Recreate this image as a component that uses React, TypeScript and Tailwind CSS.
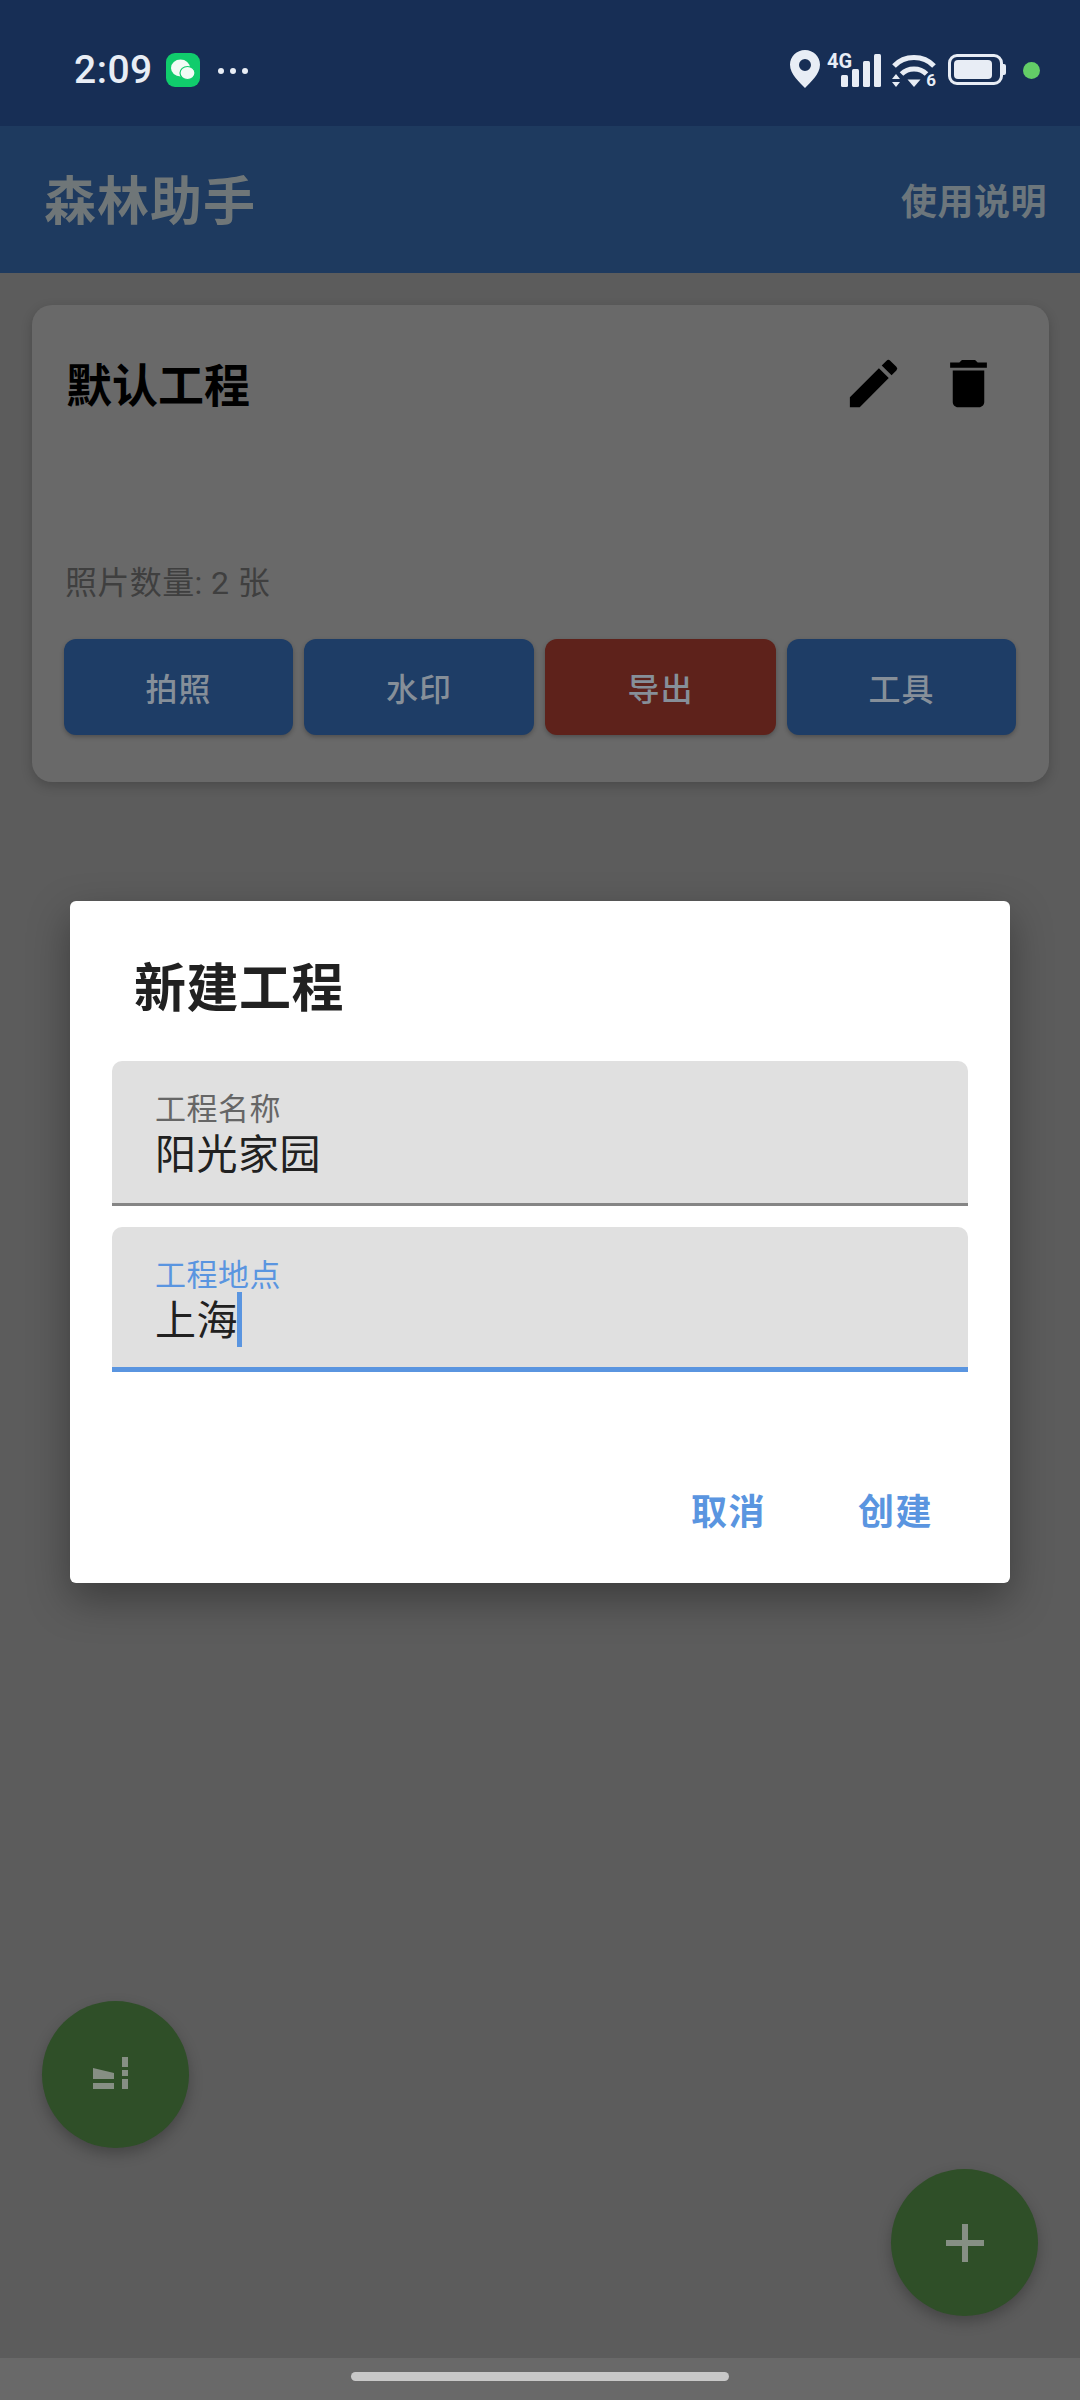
import { MdDelete, MdEdit } from 'react-icons/md';

const CJK = "font-['Roboto','Noto_Sans_CJK_SC',sans-serif]";

const actions = [
  { label: '拍照', color: 'bg-[#1e3d66]', width: 'w-[229px]' },
  { label: '水印', color: 'bg-[#1e3d66]', width: 'w-[230px]' },
  { label: '导出', color: 'bg-[#5e221b]', width: 'w-[231px]' },
  { label: '工具', color: 'bg-[#1e3d66]', width: 'w-[229px]' },
];

const StatusBar = () => (
  <div className="h-[126px] shrink-0 bg-[#172e55] flex items-start pt-[50px] pl-[74px] pr-[40px] text-[#e8edf5]">
    <span className="text-[39px] leading-[40px] font-medium font-['Roboto',sans-serif] tracking-[0.5px]">2:09</span>
    {/* WeChat notification */}
    <div className="ml-[13px] mt-[3px] w-[34px] h-[34px] rounded-[9px] bg-[#10cc6c] flex items-center justify-center">
      <svg width="26" height="24" viewBox="0 0 26 24" fill="#f2fbf5">
        <ellipse cx="10.5" cy="10" rx="9.5" ry="8.5" />
        <ellipse cx="17.5" cy="15" rx="7.5" ry="6.5" stroke="#10cc6c" strokeWidth="1.2" />
      </svg>
    </div>
    <div className="ml-[18px] mt-[18px] flex gap-[6px]">
      <div className="w-[6px] h-[6px] rounded-full bg-[#e8edf5]" />
      <div className="w-[6px] h-[6px] rounded-full bg-[#e8edf5]" />
      <div className="w-[6px] h-[6px] rounded-full bg-[#e8edf5]" />
    </div>
    <div className="ml-auto flex items-start">
      {/* location */}
      <svg width="30" height="38" viewBox="0 0 30 38" fill="#e8edf5">
        <path fillRule="evenodd" d="M15 0C6.7 0 0 6.6 0 14.8 0 24 9.5 32.5 15 38c5.5-5.5 15-14 15-23.2C30 6.6 23.3 0 15 0zm0 9a6 6 0 1 1 0 12 6 6 0 0 1 0-12z" />
      </svg>
      {/* 4G + signal */}
      <div className="relative ml-[7px] w-[54px] h-[38px]">
        <span className="absolute left-0 top-[1px] text-[20px] leading-[20px] font-bold font-['Roboto',sans-serif]">4G</span>
        <svg className="absolute left-[14px] top-[4px]" width="41" height="33" viewBox="0 0 41 33" fill="#e8edf5">
          <rect x="0" y="21" width="7" height="12" rx="1.5" />
          <rect x="11" y="15" width="7" height="18" rx="1.5" />
          <rect x="22" y="7" width="7" height="26" rx="1.5" />
          <rect x="33" y="0" width="7" height="33" rx="1.5" />
        </svg>
      </div>
      {/* wifi */}
      <div className="relative ml-[11px] w-[44px] h-[38px]">
        <svg className="absolute left-0 top-[5px]" width="44" height="33" viewBox="0 0 44 33" fill="none">
          <path d="M2 11C8 4.500 14 2.500 22 2.500S36 4.500 42 11" stroke="#e8edf5" strokeWidth="5" />
          <path d="M9.500 19C13 15.500 17 14 22 14s9 1.500 12.500 5" stroke="#e8edf5" strokeWidth="5" />
          <path d="M15.500 24.500h13L22 32z" fill="#e8edf5" />
          <path d="M0 24l4-5 4 5zM0 27h8l-4 5z" fill="#e8edf5" />
        </svg>
        <span className="absolute right-0 top-[22px] text-[17px] leading-[17px] font-bold font-['Roboto',sans-serif]">6</span>
      </div>
      {/* battery */}
      <div className="ml-[12px] mt-[4px] flex items-center">
        <div className="w-[55px] h-[31px] rounded-[9px] border-[3px] border-[#e8edf5] p-[3px]">
          <div className="w-[38px] h-full rounded-[4px] bg-[#e8edf5]" />
        </div>
        <div className="w-[3px] h-[11px] rounded-r-[2px] bg-[#e8edf5]" />
      </div>
      <div className="ml-[17px] mt-[12px] w-[17px] h-[17px] rounded-full bg-[#63cd67]" />
    </div>
  </div>
);

const Field = ({ label, value, focused }: { label: string; value: string; focused?: boolean }) => (
  <div
    className={`h-[145px] rounded-t-[10px] bg-[#e0e0e0] pl-[43px] pt-[33px] ${
      focused ? 'border-b-[5px] border-[#5a95e0]' : 'border-b-[3px] border-[#858585]'
    }`}
  >
    <div className={`text-[31px] leading-[32px] tracking-[0.5px] ${focused ? 'text-[#5a95e0]' : 'text-[#666666]'}`}>{label}</div>
    <div className="flex items-center mt-[4px] h-[50px] text-[41px] leading-[50px] tracking-[0.5px] text-[#212121]">
      {value}
      {focused && <div className="w-[5px] h-[55px] bg-[#5a95e0] -mt-[3px] -ml-[1px]" />}
    </div>
  </div>
);

export default function App() {
  return (
    <div className={`relative w-[1080px] h-[2400px] overflow-hidden flex flex-col bg-[#5c5c5c] ${CJK}`}>
      <StatusBar />

      {/* App bar */}
      <div className="h-[147px] shrink-0 bg-[#1e3a5f] flex items-center justify-between pl-[44px] pr-[33px]">
        <span className="pt-[7px] text-[52px] font-bold tracking-[1px] text-[#6f7678]">森林助手</span>
        <span className="pt-[6px] text-[36px] font-semibold tracking-[0.5px] text-[#6c767c]">使用说明</span>
      </div>

      {/* Project list */}
      <div className="flex-1 pt-[32px] pl-[32px]">
        <div className="w-[1017px] h-[477px] rounded-[20px] bg-[#696969] shadow-[0_4px_12px_rgba(0,0,0,0.2)] px-[32px] pt-[47px]">
          <div className="flex items-center justify-between h-[63px] pl-[2px] pr-[17px]">
            <span className="pt-[6px] text-[46px] font-bold text-black">默认工程</span>
            <div className="flex items-center gap-[32px] text-black">
              <MdEdit size={63} />
              <MdDelete size={63} />
            </div>
          </div>
          <div className="mt-[146px] pl-[1px] text-[32px] leading-[44px] tracking-[0.4px] text-[#3f3f3f]">照片数量: 2 张</div>
          <div className="mt-[34px] flex gap-[11px]">
            {actions.map((a) => (
              <div
                key={a.label}
                className={`${a.color} ${a.width} h-[96px] pt-[5px] rounded-[12px] shadow-[0_2px_4px_rgba(0,0,0,0.25)] flex items-center justify-center text-[32px] font-medium tracking-[1px] text-[#868f99]`}
              >
                {a.label}
              </div>
            ))}
          </div>
        </div>
      </div>

      {/* Gesture bar */}
      <div className="h-[42px] shrink-0 bg-[#696969] flex items-center justify-center">
        <div className="w-[378px] h-[9px] rounded-full bg-[#c8c8c8] -mt-[6px]" />
      </div>

      {/* Floating buttons */}
      <div className="absolute left-[42px] top-[2001px] w-[147px] h-[147px] rounded-full bg-[#2f4f28] shadow-[0_6px_14px_rgba(0,0,0,0.25)] flex items-center justify-center">
        <svg className="-ml-[11px] -mt-[3px]" width="35" height="32" viewBox="0 0 35 32" fill="#868f84">
          <path d="M0 11l21 5v6H0z" />
          <rect x="0" y="26" width="21" height="6" />
          <rect x="29" y="0" width="6" height="10" />
          <rect x="29" y="13" width="6" height="6" />
          <rect x="29" y="22" width="6" height="10" />
        </svg>
      </div>
      <div className="absolute left-[891px] top-[2169px] w-[147px] h-[147px] rounded-full bg-[#2f4f28] shadow-[0_6px_14px_rgba(0,0,0,0.25)] flex items-center justify-center">
        <svg width="38" height="38" viewBox="0 0 38 38" fill="#868f84">
          <rect x="16" y="0" width="6" height="38" />
          <rect x="0" y="16" width="38" height="6" />
        </svg>
      </div>

      {/* New project dialog */}
      <div className="absolute left-[70px] top-[901px] w-[940px] h-[682px] rounded-[6px] bg-white shadow-[0_16px_40px_rgba(0,0,0,0.35)] flex flex-col">
        <div className="h-[160px] shrink-0 pl-[64px] pt-[57px] text-[52px] leading-[64px] font-semibold tracking-[0.5px] text-[#212121]">新建工程</div>
        <div className="px-[42px] flex flex-col gap-[21px]">
          <Field label="工程名称" value="阳光家园" />
          <Field label="工程地点" value="上海" focused />
        </div>
        <div className="mt-auto h-[94px] flex items-start justify-end gap-[92px] pr-[77px] text-[36px] font-semibold tracking-[1.5px] text-[#5a95e0] leading-[48px]">
          <span>取消</span>
          <span>创建</span>
        </div>
      </div>
    </div>
  );
}
